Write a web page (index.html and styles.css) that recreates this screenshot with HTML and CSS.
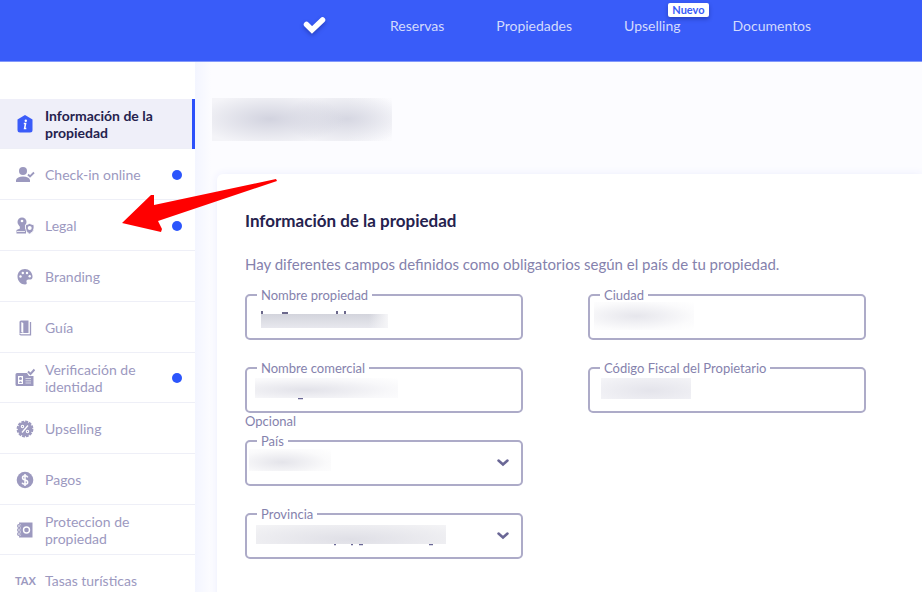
FILE: index.html
```html
<!DOCTYPE html>
<html lang="es">
<head>
  <meta charset="UTF-8">
  <meta name="viewport" content="width=device-width, initial-scale=1.0">
  <title>Información de la propiedad</title>
  <link rel="stylesheet" href="styles.css">
</head>
<body>
  <!-- Header -->
  <header class="topbar">
    <a href="#" class="logo" aria-label="Inicio">
      <svg width="26" height="22" viewBox="0 0 26 22"><path d="M4.500 9.500 L10 15 L20.500 5" fill="none" stroke="#fff" stroke-width="5.500" stroke-linecap="round" stroke-linejoin="miter"/></svg>
    </a>
    <nav class="topnav">
      <a href="#">Reservas</a>
      <a href="#">Propiedades</a>
      <a href="#">Upselling<span class="badge">Nuevo</span></a>
      <a href="#">Documentos</a>
    </nav>
  </header>

  <div class="layout">
    <!-- Sidebar -->
    <nav class="sidebar">
      <a href="#" class="item two-lines active">
        <svg class="icon" viewBox="0 0 20 20"><path d="M10 1 L17.500 5.500 V16 Q17.500 18.500 15 18.500 H5 Q2.500 18.500 2.500 16 V5.500 Z" fill="#3b5cf9"/><circle cx="10.800" cy="6.800" r="1.200" fill="#fff"/><path d="M8.800 9.500 H10.600 L9.600 14.500 H11.300" fill="none" stroke="#fff" stroke-width="1.500"/></svg>
        <span>Información de la propiedad</span>
      </a>
      <a href="#" class="item">
        <svg class="icon" viewBox="0 0 20 20"><circle cx="8" cy="6" r="4" fill="currentColor"/><path d="M1 17 V15 Q2 11.500 8 11.500 Q14 11.500 15 15 V17 Z" fill="currentColor"/><path d="M13 9.500 L15 11.500 L19 7.500" fill="none" stroke="currentColor" stroke-width="1.800"/></svg>
        <span>Check-in online</span>
        <i class="dot"></i>
      </a>
      <a href="#" class="item">
        <svg class="icon" viewBox="0 0 20 20"><circle cx="7" cy="6" r="4.500" fill="currentColor"/><circle cx="7" cy="5" r="1.300" fill="#fff"/><path d="M4.500 9.500 H10 V13 H11 V17.500 H1.500 V14 L5 12.500 Z" fill="currentColor"/><path d="M2 15.500 H10" stroke="#fff" stroke-width="0.800"/><path d="M14.500 7.500 L19 9 V12 Q19 16 14.500 18 Q10.500 16 10.500 12 V9 Z" fill="currentColor" stroke="#fff" stroke-width="0.800"/><circle cx="14.700" cy="12" r="2" fill="#fff"/></svg>
        <span>Legal</span>
        <i class="dot"></i>
      </a>
      <a href="#" class="item">
        <svg class="icon" viewBox="0 0 20 20"><path d="M10 2 C5.500 2 2.500 5.500 2.500 9.500 C2.500 14 6 17.500 10 17.500 C12 17.500 12 16 11.500 15 C11 13.500 12 12.500 13.500 12.500 H15.500 C17 12.500 17.700 11 17.500 9 C17 5 14 2 10 2 Z" fill="currentColor"/><g fill="#fff"><circle cx="5.500" cy="9.500" r="1.200"/><circle cx="7.800" cy="6" r="1.200"/><circle cx="12" cy="6" r="1.200"/><circle cx="14.700" cy="9.200" r="1.200"/></g></svg>
        <span>Branding</span>
      </a>
      <a href="#" class="item">
        <svg class="icon" viewBox="0 0 20 20"><path d="M4.500 4 Q4.500 2.500 6 2.500 H13.500 V15 H4.500 Z" fill="currentColor"/><path d="M6.300 4 L8.300 5 V15 L6.300 14 Z" fill="#fff"/><path d="M15.500 4 V16.800 H6 Q4.800 16.800 4.800 15.500" fill="none" stroke="currentColor" stroke-width="1.300"/></svg>
        <span>Guía</span>
      </a>
      <a href="#" class="item two-lines">
        <svg class="icon" viewBox="0 0 20 20"><path d="M2 5 H12 L14 8 H18.500 V18 H2 Q0.500 18 0.500 16.500 V6.500 Q0.500 5 2 5 Z" fill="currentColor"/><path d="M13 3.500 L15.500 6 L19.500 1.500" fill="none" stroke="currentColor" stroke-width="2"/><path d="M3 8 H8 V16 H3 Z" fill="#fff"/><circle cx="5.500" cy="10.500" r="1.500" fill="currentColor"/><path d="M3.800 15 Q5.500 11.500 7.200 15 Z" fill="currentColor"/><path d="M10.500 10.500 H16 M10.500 12.800 H16 M10.500 15 H16" stroke="#fff" stroke-width="0.600"/></svg>
        <span>Verificación de identidad</span>
        <i class="dot"></i>
      </a>
      <a href="#" class="item">
        <svg class="icon" viewBox="0 0 20 20"><circle cx="10" cy="10" r="7.200" fill="currentColor"/><circle cx="10" cy="10" r="7.400" fill="none" stroke="currentColor" stroke-width="2" stroke-dasharray="2.900 0.970"/><path d="M7 13.500 L13 6.500" stroke="#fff" stroke-width="1.300"/><circle cx="7.500" cy="7.500" r="1.200" fill="none" stroke="#fff" stroke-width="1.100"/><circle cx="12.500" cy="12.500" r="1.200" fill="none" stroke="#fff" stroke-width="1.100"/></svg>
        <span>Upselling</span>
      </a>
      <a href="#" class="item">
        <svg class="icon" viewBox="0 0 20 20"><circle cx="10" cy="10" r="8.300" fill="currentColor"/><path d="M12.800 7.300 Q12 5.800 10 5.800 Q7.500 5.800 7.500 7.800 Q7.500 9.500 10 10 Q12.700 10.500 12.700 12.300 Q12.700 14.300 10 14.300 Q7.700 14.300 7 12.700 M10 4 V16" fill="none" stroke="#fff" stroke-width="1.500"/></svg>
        <span>Pagos</span>
      </a>
      <a href="#" class="item two-lines">
        <svg class="icon" viewBox="0 0 20 20"><path d="M4 2.500 H17.500 V17.500 H4 Z" fill="currentColor"/><circle cx="11.500" cy="10" r="3" fill="none" stroke="#fff" stroke-width="1.400"/><g fill="#fff"><circle cx="4" cy="6" r="2.200"/><circle cx="4" cy="10" r="2.200"/><circle cx="4" cy="14" r="2.200"/></g><g fill="none" stroke="currentColor" stroke-width="1.200"><circle cx="4" cy="6" r="1.400"/><circle cx="4" cy="10" r="1.400"/><circle cx="4" cy="14" r="1.400"/></g></svg>
        <span>Proteccion de propiedad</span>
      </a>
      <a href="#" class="item">
        <b class="tax">TAX</b>
        <span>Tasas turísticas</span>
      </a>
    </nav>

    <!-- Main Content -->
    <main class="content">
      <div class="blur-title"></div>
      <section class="card">
        <h1>Información de la propiedad</h1>
        <p>Hay diferentes campos definidos como obligatorios según el país de tu propiedad.</p>
        <form class="form">
          <div class="field">
            <input type="text" id="nombre">
            <label for="nombre">Nombre propiedad</label>
            <svg class="mark mark-nombre" viewBox="0 0 127 20"><path d="M1 1 V4 M21 3 H27 M76 1 V4 M84 1 V4" stroke="#3c3867" stroke-width="1.500"/></svg>
            <div class="blur blur-nombre"></div>
          </div>
          <div class="field">
            <input type="text" id="ciudad">
            <label for="ciudad">Ciudad</label>
            <div class="blur blur-ciudad"></div>
          </div>
          <div class="field">
            <input type="text" id="comercial">
            <label for="comercial">Nombre comercial</label>
            <svg class="mark mark-comercial" viewBox="0 0 143 22"><path d="M43 20.500 H48" stroke="#6a6796" stroke-width="1.500"/></svg>
            <div class="blur blur-comercial"></div>
            <small>Opcional</small>
          </div>
          <div class="field">
            <input type="text" id="fiscal">
            <label for="fiscal">Código Fiscal del Propietario</label>
            <div class="blur blur-fiscal"></div>
          </div>
          <div class="field first">
            <select id="pais"><option></option></select>
            <label for="pais">País</label>
            <div class="blur blur-pais"></div>
            <svg class="chevron" viewBox="0 0 12 8"><path d="M1.500 1.500 L6 5.500 L10.500 1.500" fill="none" stroke="#6a6796" stroke-width="2.500" stroke-linecap="round"/></svg>
          </div>
          <div class="field first">
            <select id="provincia"><option></option></select>
            <label for="provincia">Provincia</label>
            <svg class="mark mark-provincia" viewBox="0 0 190 22"><path d="M78 19.500 H80 M95 19.500 H97 M103 19.500 H107 M173 19.500 H177" stroke="#6a6796" stroke-width="1.500"/></svg>
            <div class="blur blur-provincia"></div>
            <svg class="chevron" viewBox="0 0 12 8"><path d="M1.500 1.500 L6 5.500 L10.500 1.500" fill="none" stroke="#6a6796" stroke-width="2.500" stroke-linecap="round"/></svg>
          </div>
        </form>
      </section>
    </main>
  </div>

  <!-- Arrow pointing at Legal -->
  <svg class="arrow" viewBox="0 0 157 54"><path d="M0 45 L29 17 L32 17 L32 27 L154 1 L155 3 L36 43 L40 51 L39 54 Z" fill="#f00"/></svg>
</body>
</html>
```

FILE: styles.css
```css
* {
  box-sizing: border-box;
}
body {
  font-family: Lato, "Liberation Sans", sans-serif;
  margin: 0;
  min-height: 100vh;
  display: flex;
  flex-direction: column;
  background-color: #fcfcff;
  color: #9c99bf;
  font-size: 14px;
}
a {
  color: inherit;
  text-decoration: none;
}
.topbar {
  display: flex;
  align-items: center;
  height: 62px;
  padding: 0 0 10px 302px;
  background-color: #395cf9;
  border-bottom: 1px solid #8298fb;
}
.logo {
  display: flex;
  width: 88px;
  filter: drop-shadow(0 2px 2px rgba(0, 0, 60, 0.3));
}
.topnav {
  display: flex;
  gap: 52px;
  color: #d3dafd;
}
.topnav a {
  position: relative;
}
.badge {
  position: absolute;
  right: -28px;
  top: -14px;
  padding: 0 4px;
  border-radius: 2px;
  background-color: #fff;
  color: #395cf9;
  font-size: 11px;
  line-height: 14px;
  font-weight: bold;
  box-shadow: 0 2px 4px rgba(0, 0, 60, 0.3);
}
.layout {
  display: flex;
  flex: 1;
}
.sidebar {
  flex: 0 0 195px;
  padding-top: 37px;
  background-color: #fff;
}
.item {
  display: flex;
  align-items: center;
  height: 51px;
  padding: 0 13px 0 15px;
  box-shadow: inset 0 -1px #eeeff7;
  line-height: 17px;
}
.two-lines {
  height: 50px;
}
.item span {
  flex: 1;
}
.active {
  background-color: #efeff9;
  border-right: 3px solid #2c50fb;
  color: #25224e;
  font-weight: bold;
}
.icon {
  width: 20px;
  height: 20px;
  margin-right: 10px;
}
.tax {
  width: 30px;
  font-size: 11px;
}
.dot {
  width: 10px;
  height: 10px;
  border-radius: 50%;
  background-color: #2c55fc;
}
.content {
  flex: 1;
  display: flex;
  flex-direction: column;
  padding: 36px 0 0 17px;
  background: linear-gradient(to right, #f3f5ff, #fcfcff 16px);
}
.blur-title {
  width: 180px;
  height: 43px;
  background: radial-gradient(ellipse 75px 26px at 58px 21px, #d2d3df, transparent), radial-gradient(ellipse 65px 26px at 135px 21px, #d6d7e2, transparent), linear-gradient(to right, #f4f4f8, #f4f4f8 75%, #fbfbfe);
}
.card {
  flex: 1;
  margin: 33px 0 0 5px;
  padding: 36px 56px 20px 28px;
  border-radius: 6px 0 0 0;
  background-color: #fff;
  box-shadow: 0 0 8px #eceefd;
}
.card h1 {
  margin: 0 0 22px;
  color: #25224e;
  font-size: 17px;
  line-height: 22px;
}
.card p {
  margin: 0 0 20px;
  color: #8582ad;
  font-size: 15px;
  line-height: 20px;
}
.form {
  display: grid;
  grid-template-columns: 1fr 1fr;
  column-gap: 65px;
}
.field {
  position: relative;
  height: 73px;
}
.first {
  grid-column: 1;
}
.field input, .field select {
  display: block;
  width: 100%;
  height: 46px;
  padding: 0 16px;
  border: 2px solid #adabc8;
  border-radius: 5px;
  background-color: #fff;
  appearance: none;
  font: inherit;
}
.field label {
  position: absolute;
  left: 12px;
  top: -7px;
  padding: 0 4px;
  background-color: #fff;
  color: #8582ad;
  font-size: 13px;
  line-height: 16px;
}
.field small {
  display: block;
  color: #8582ad;
  font-size: 13px;
  line-height: 16px;
}
.chevron {
  position: absolute;
  right: 14px;
  top: 19px;
  width: 12px;
  height: 8px;
}
.blur, .mark {
  position: absolute;
  pointer-events: none;
}
.mark-nombre {
  left: 16px;
  top: 16px;
  width: 127px;
  height: 20px;
}
.mark-comercial {
  left: 10px;
  top: 11px;
  width: 143px;
  height: 22px;
}
.mark-provincia {
  left: 11px;
  top: 12px;
  width: 190px;
  height: 22px;
}
.blur-nombre {
  left: 16px;
  top: 20px;
  width: 127px;
  height: 14px;
  background: linear-gradient(to right, transparent 85%, #f6f6f8), linear-gradient(#d3d4dc, #e8e8ee);
}
.blur-ciudad {
  left: 6px;
  top: 8px;
  width: 100px;
  height: 28px;
  background: radial-gradient(ellipse at 42% 50%, #e6e6ec, #fbfbfc 70%, #fff);
}
.blur-comercial {
  left: 10px;
  top: 11px;
  width: 143px;
  height: 20px;
  background: radial-gradient(ellipse at 35% 60%, #e2e2e9, #f8f8fa 65%, #fff);
}
.blur-fiscal {
  left: 13px;
  top: 11px;
  width: 90px;
  height: 21px;
  background: radial-gradient(ellipse at 55% 60%, #e4e4eb, #f5f5f8);
}
.blur-pais {
  left: 4px;
  top: 9px;
  width: 82px;
  height: 22px;
  background: radial-gradient(ellipse at 40% 60%, #e4e4ea, #fafafb 65%, #fff);
}
.blur-provincia {
  left: 11px;
  top: 12px;
  width: 190px;
  height: 19px;
  background: radial-gradient(ellipse at 50% 75%, #dfdfe6, #f4f4f6);
}
.arrow {
  position: absolute;
  left: 122px;
  top: 178px;
  width: 157px;
  height: 54px;
  pointer-events: none;
}
```
